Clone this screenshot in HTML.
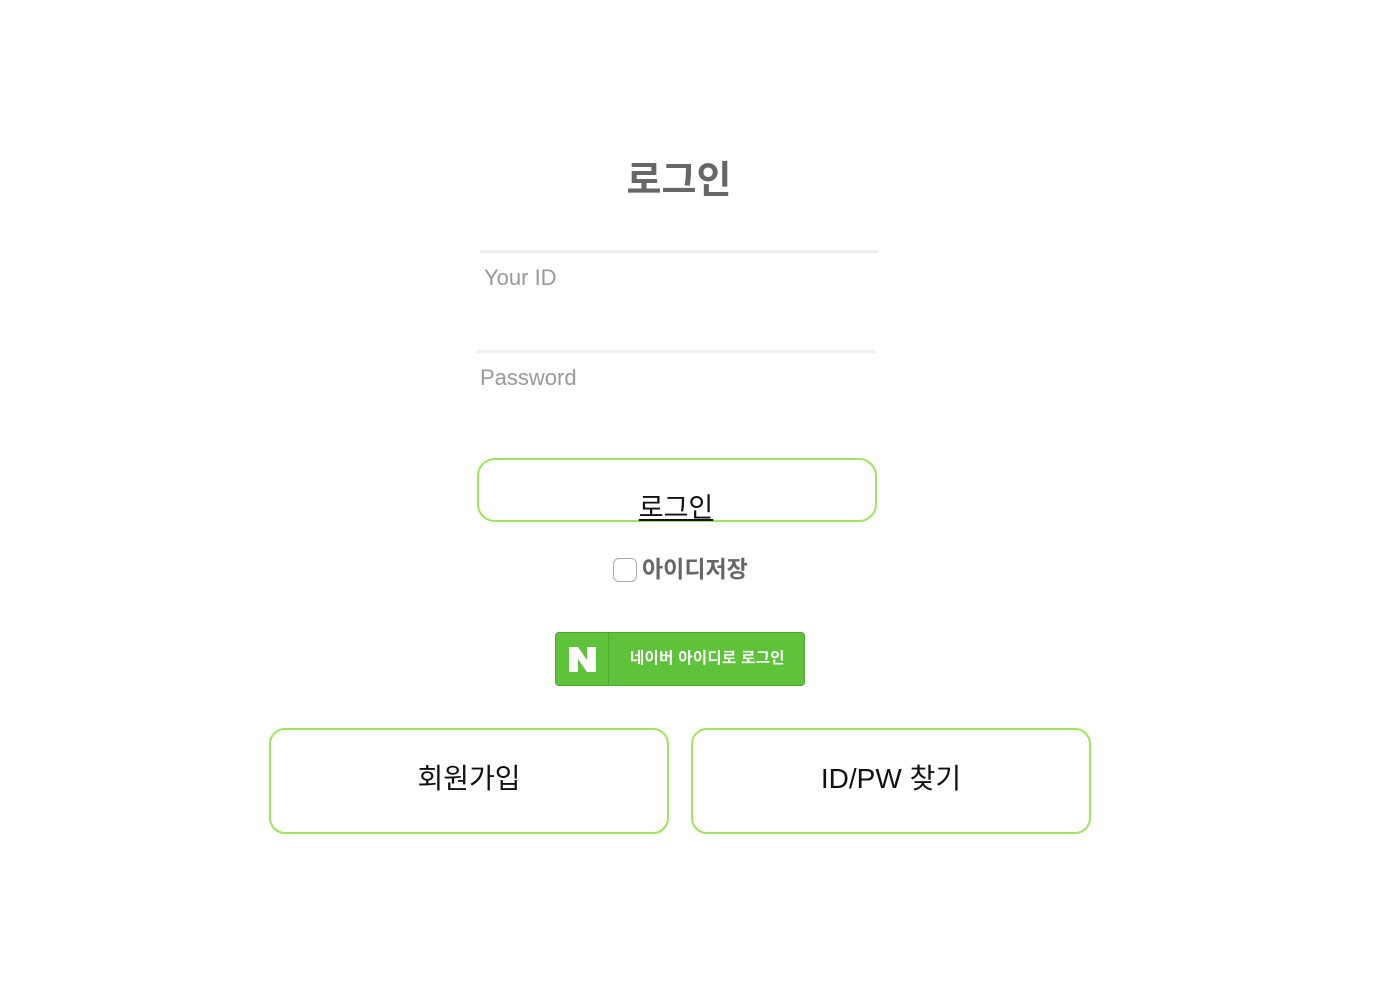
<!DOCTYPE html>
<html><head><meta charset="utf-8"><style>
*{margin:0;padding:0;box-sizing:border-box}
body{width:1386px;height:988px;background:#fff;font-family:"Liberation Sans","Noto Sans CJK KR",sans-serif;position:relative;overflow:hidden}
.a{position:absolute}
h1{position:absolute;left:0;width:1358px;top:157px;text-align:center;font-size:38px;font-weight:bold;color:#666;line-height:48px}
.inp{position:absolute;width:398px;height:55px;border-top:3px solid #eee;color:#999;font-size:22px;padding:12px 0 0 4px}
.btn{position:absolute;border:2px solid #9ee55a;border-radius:16px;background:#fff;text-align:center;color:#111}
</style></head><body>
<h1>로그인</h1>
<div class="inp" style="left:480px;top:250px">Your ID</div>
<div class="inp" style="left:477px;top:350px;padding-left:3px">Password</div>
<div class="btn" style="left:477px;top:458px;width:400px;height:64px;border-radius:18px"><span class="a" style="left:0;width:394px;top:31px;font-size:27px;text-decoration:underline;line-height:34px">로그인</span></div>
<div class="a" style="left:613px;top:558px;width:24px;height:24px;border:1.5px solid #aaa;border-radius:6px"></div>
<div class="a" style="left:642px;top:553px;font-size:23px;font-weight:bold;color:#666;line-height:32px">아이디저장</div>
<div class="a" style="left:555px;top:632px;width:250px;height:54px;background:#5ec23a;border:1px solid #4ea830;border-radius:4px">
<div class="a" style="left:52px;top:0;width:1px;height:52px;background:#4ea830"></div>
<svg class="a" style="left:13px;top:14px" width="27" height="25" viewBox="0 0 27 25"><path d="M0 0H9L18 13V0H27V25H18L9 12V25H0Z" fill="#fff"/></svg>
<div class="a" style="left:74px;top:15px;color:#fff;font-size:15.5px;font-weight:bold;line-height:22px;letter-spacing:0.3px">네이버 아이디로 로그인</div>
</div>
<div class="btn" style="left:269px;top:728px;width:400px;height:106px;font-size:28px;line-height:98px">회원가입</div>
<div class="btn" style="left:691px;top:728px;width:400px;height:106px;font-size:28px;line-height:98px">ID/PW 찾기</div>
</body></html>
